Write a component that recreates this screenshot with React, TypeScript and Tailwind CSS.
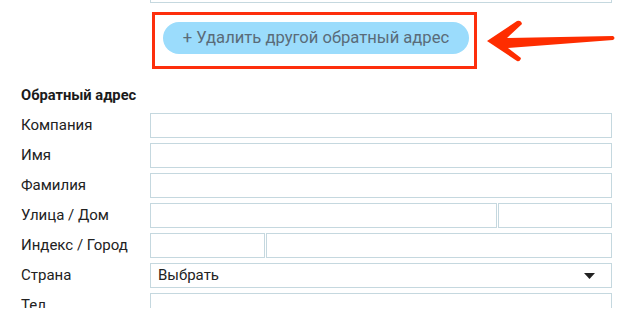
import React from "react";

const rows = [
  { label: "Компания", kind: "single" },
  { label: "Имя", kind: "single" },
  { label: "Фамилия", kind: "single" },
  { label: "Улица / Дом", kind: "street" },
  { label: "Индекс / Город", kind: "zip" },
  { label: "Страна", kind: "select" },
  { label: "Тел.", kind: "single" },
];

const box = "h-[25px] border border-[#c5d8df] bg-white";

function Field({ kind }: { kind: string }) {
  if (kind === "street")
    return (
      <div className="flex gap-[1px]">
        <div className={`${box} w-[347px]`} />
        <div className={`${box} flex-1`} />
      </div>
    );
  if (kind === "zip")
    return (
      <div className="flex gap-[1px]">
        <div className={`${box} w-[115px]`} />
        <div className={`${box} flex-1`} />
      </div>
    );
  if (kind === "select")
    return (
      <div className={`${box} flex items-center justify-between pl-[7px] pr-[16px] text-[15px] text-[#222]`}>
        <span>Выбрать</span>
        <svg width="11" height="6" viewBox="0 0 11 6">
          <path d="M0 0h11L5.5 6z" fill="#222" />
        </svg>
      </div>
    );
  return <div className={box} />;
}

export default function App() {
  return (
    <div className="relative w-[621px] h-[332px] bg-white overflow-hidden font-['Roboto',sans-serif]">
      <div className="h-[308px] overflow-hidden">
        {/* end of the previous input */}
        <div className="ml-[150px] w-[462px] h-[3px] border border-t-0 border-[#c5d8df]" />

        <div className="mt-[19px] pl-[163px]">
          <button className="h-[32px] w-[306px] rounded-full bg-[#9bdcfc] text-[16.6px] text-[#5a6b78]">
            + Удалить другой обратный адрес
          </button>
        </div>

        <div className="mt-[33px] pl-[21px] text-[14.7px] font-bold leading-[17px] text-[#1b1b1b]">
          Обратный адрес
        </div>

        <div className="mt-[9px] flex flex-col gap-[5px] pr-[9px]">
          {rows.map((r) => (
            <div key={r.label} className="flex items-center">
              <div className="w-[150px] pl-[21px] text-[15px] text-[#222]">{r.label}</div>
              <div className="flex-1">
                <Field kind={r.kind} />
              </div>
            </div>
          ))}
        </div>
      </div>

      {/* annotation */}
      <div className="absolute left-[152px] top-[12px] w-[325px] h-[57px] border-[3px] border-[#fd2f0c]" />
      <svg className="absolute left-0 top-0" width="621" height="80" viewBox="0 0 621 80">
        <path
          d="M487 41 L517 21 Q521 20 522 24 L507 38 L613 36 Q616 38 613 40 L508 48 L521 58 Q520 62 517 61 Z"
          fill="#fe2d00"
        />
      </svg>
    </div>
  );
}
